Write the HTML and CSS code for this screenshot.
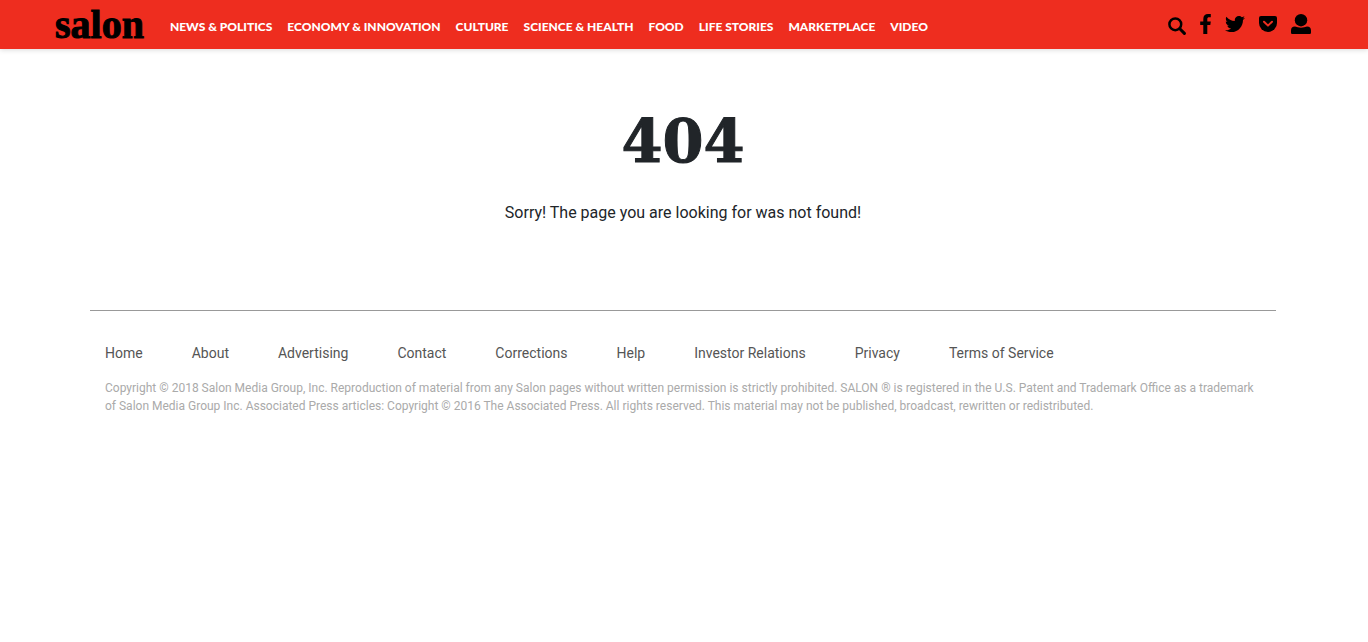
FILE: index.html
```html
<!DOCTYPE html>
<html lang="en">
<head>
<meta charset="utf-8">
<title>Salon - 404</title>
<link rel="stylesheet" href="styles.css">
</head>
<body>
<header class="site-header">
  <a class="logo" href="#">salon</a>
  <nav class="main-nav" aria-label="Sections">
    <a href="#">NEWS &amp; POLITICS</a>
    <a href="#">ECONOMY &amp; INNOVATION</a>
    <a href="#">CULTURE</a>
    <a href="#">SCIENCE &amp; HEALTH</a>
    <a href="#">FOOD</a>
    <a href="#">LIFE STORIES</a>
    <a href="#">MARKETPLACE</a>
    <a href="#">VIDEO</a>
  </nav>
  <div class="tools">
    <button class="tool search" type="button" aria-label="Search">
      <svg width="18" height="18" viewBox="0 0 18 18"><circle cx="7.3" cy="7.3" r="5.9" fill="none" stroke="#000" stroke-width="2.5"/><path d="M11.8 11.8L16.4 16.4" stroke="#000" stroke-width="3" stroke-linecap="round"/></svg>
    </button>
    <a class="tool" href="#" aria-label="Facebook">
      <svg width="11" height="20" viewBox="0 0 11 20"><path d="M3.300 20V11.100H.2V7.500h3.100V5c0-3.200 1.800-5 4.700-5h2.800v3.300H9.300C7.900 3.300 7.300 3.900 7.300 5.100v2.400h3.500l-.5 3.600h-3V20z"/></svg>
    </a>
    <a class="tool" href="#" aria-label="Twitter">
      <svg width="20" height="20" viewBox="0 0 512 512"><path d="M459.370 151.716c.325 4.548.325 9.097.325 13.645 0 138.720-105.583 298.558-298.558 298.558-59.452 0-114.680-17.219-161.137-47.106 8.447.974 16.568 1.299 25.340 1.299 49.055 0 94.213-16.568 130.274-44.832-46.132-.975-84.792-31.188-98.112-72.772 6.498.974 12.995 1.624 19.818 1.624 9.421 0 18.843-1.300 27.614-3.573-48.081-9.747-84.143-51.980-84.143-102.985v-1.299c13.969 7.797 30.214 12.670 47.431 13.319-28.264-18.843-46.781-51.005-46.781-87.391 0-19.492 5.197-37.360 14.294-52.954 51.655 63.675 129.300 105.258 216.365 109.807-1.624-7.797-2.599-15.918-2.599-24.040 0-57.828 46.782-104.934 104.934-104.934 30.213 0 57.502 12.670 76.670 33.137 23.715-4.548 46.456-13.320 66.599-25.340-7.798 24.366-24.366 44.833-46.132 57.827 21.117-2.273 41.584-8.122 60.426-16.243-14.292 20.791-32.161 39.308-52.628 54.253z"/></svg>
    </a>
    <a class="tool" href="#" aria-label="Pocket">
      <svg width="18" height="16" viewBox="0 0 18 16"><path d="M2 0h14a2 2 0 0 1 2 2v5a9 9 0 0 1-18 0V2a2 2 0 0 1 2-2z"/><path d="M5 5.700l4 3.900 4-3.900" fill="none" stroke="#ee2d1f" stroke-width="2" stroke-linecap="round" stroke-linejoin="round"/></svg>
    </a>
    <button class="tool" type="button" aria-label="Account">
      <svg width="20" height="20" viewBox="0 0 20 20"><circle cx="10" cy="6.200" r="6.200"/><path d="M0 16.500C0 14 1.300 12.500 4 12.500c3.500 1.500 8.500 1.500 12 0C18.700 12.500 20 14 20 16.500v2c0 1-.6 1.500-1.600 1.500H1.600C.6 20 0 19.500 0 18.500z"/></svg>
    </button>
  </div>
</header>
<main class="message">
  <h1>404</h1>
  <p>Sorry! The page you are looking for was not found!</p>
</main>
<footer class="site-footer">
  <nav class="footer-nav" aria-label="Footer">
    <a href="#">Home</a>
    <a href="#">About</a>
    <a href="#">Advertising</a>
    <a href="#">Contact</a>
    <a href="#">Corrections</a>
    <a href="#">Help</a>
    <a href="#">Investor Relations</a>
    <a href="#">Privacy</a>
    <a href="#">Terms of Service</a>
  </nav>
  <p class="legal">Copyright © 2018 Salon Media Group, Inc. Reproduction of material from any Salon pages without written permission is strictly prohibited. SALON ® is registered in the U.S. Patent and Trademark Office as a trademark of Salon Media Group Inc. Associated Press articles: Copyright © 2016 The Associated Press. All rights reserved. This material may not be published, broadcast, rewritten or redistributed.</p>
</footer>
</body>
</html>
```
FILE: styles.css
```css
* {
  box-sizing: border-box;
}

body {
  margin: 0;
  background: #fff;
  color: #212529;
  font-family: Roboto, sans-serif;
  font-size: 16px;
  line-height: 24px;
}

a {
  color: inherit;
  text-decoration: none;
}

.site-header {
  display: flex;
  align-items: center;
  padding: 0 57px 0 55px;
  background: #ee2d1f;
  box-shadow: 0 1px 5px rgba(0, 0, 0, 0.15);
}

.logo {
  color: #000;
  font-family: "Liberation Serif", serif;
  font-size: 40px;
  font-weight: 700;
  line-height: 49px;
  -webkit-text-stroke: 1px #000;
}

.main-nav {
  display: flex;
  gap: 15px;
  margin-left: 26px;
  padding-top: 5px;
  color: #fff;
  font-family: Lato, sans-serif;
  font-size: 12px;
  font-weight: 900;
  white-space: nowrap;
}

.tools {
  display: flex;
  align-items: center;
  gap: 14px;
  margin-left: auto;
  padding-bottom: 1px;
}

.tool {
  display: flex;
  padding: 0;
  border: 0;
  background: none;
  cursor: pointer;
}

.search {
  padding-top: 3px;
}

.message {
  padding: 57px 17px 0 15px;
  text-align: center;
}

.message h1 {
  margin: 0;
  font-family: "DejaVu Serif", serif;
  font-size: 59px;
  font-weight: 700;
  line-height: 72px;
  -webkit-text-stroke: 1px #212529;
}

.message p {
  margin: 23px 0 0;
}

.site-footer {
  margin: 85px 92px 0 90px;
  padding: 32px 15px 0;
  border-top: 1px solid #999;
}

.footer-nav {
  display: flex;
  flex-wrap: wrap;
  gap: 49px;
  color: #555;
  font-size: 14px;
  line-height: 21px;
}

.legal {
  margin: 15px 0 0;
  color: #aaa;
  font-size: 12px;
  line-height: 18px;
}
```
